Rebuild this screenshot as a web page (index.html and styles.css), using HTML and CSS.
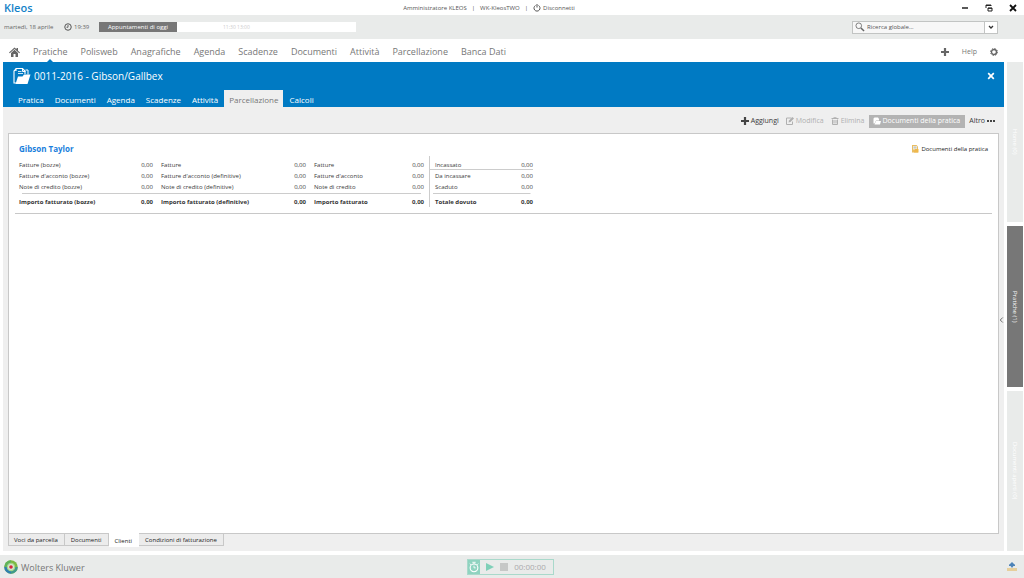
FILE: index.html
```html
<!DOCTYPE html>
<html lang="it">
<head>
<meta charset="utf-8">
<meta name="viewport" content="width=device-width, initial-scale=1">
<title>Kleos</title>
<link rel="stylesheet" href="styles.css">
</head>
<body>
<div class="app">
  <header class="titlebar">
    <div class="brand">Kleos</div>
    <div class="session">
      <span>Amministratore KLEOS</span><span>|</span><span>WK-KleosTWO</span><span>|</span>
      <button class="logout"><svg class="ico8" viewBox="0 0 16 16"><path d="M5 3a6 6 0 1 0 6 0M8 0v7" fill="none" stroke="#555" stroke-width="2"/></svg>Disconnetti</button>
    </div>
    <div class="window-controls">
      <button aria-label="Riduci"><svg viewBox="0 0 8 8"><path d="M1 4h6" stroke="#222" stroke-width="1.500"/></svg></button>
      <button aria-label="Ripristina"><svg viewBox="0 0 8 8"><path d="M1 4V1h5M1 1.500h5.500M3 4h4v3H3zM3 4.300h4" fill="none" stroke="#222"/></svg></button>
      <button aria-label="Chiudi"><svg viewBox="0 0 8 8"><path d="M1 1l6 6M7 1L1 7" stroke="#111" stroke-width="1.800"/></svg></button>
    </div>
  </header>

  <div class="infobar">
    <span class="date">martedì, 18 aprile</span>
    <span class="time"><svg class="ico8" viewBox="0 0 16 16"><circle cx="8" cy="8" r="6.500" fill="none" stroke="#555" stroke-width="2"/><path d="M8 4v4.500H5" fill="none" stroke="#555" stroke-width="1.800"/></svg>19:39</span>
    <div class="agenda-strip"><button class="today">Appuntamenti di oggi</button><span class="slot">11:30 13:00</span></div>
    <div class="search">
      <svg class="ico10" viewBox="0 0 16 16"><circle cx="6" cy="6" r="4.500" fill="none" stroke="#666" stroke-width="1.300"/><path d="M9.500 9.500l5 5" stroke="#666" stroke-width="2.400"/></svg>
      <input type="text" placeholder="Ricerca globale..." aria-label="Ricerca globale">
      <button aria-label="Opzioni di ricerca"><svg viewBox="0 0 8 8"><path d="M2 3L4 5l2-2" fill="none" stroke="#333" stroke-width="1.300"/></svg></button>
    </div>
  </div>

  <nav class="mainnav">
    <a href="#" class="home" aria-label="Home"><svg viewBox="0 0 22 20"><path d="M11 1L0 11l1.500 1.500L11 4l9.500 8.500L22 11l-4-3.600V2h-3v2.600z" fill="#666"/><path d="M11 5.500L4 12v8h5v-6h4v6h5v-8z" fill="#666"/></svg></a>
    <a href="#" class="current">Pratiche</a>
    <a href="#">Polisweb</a>
    <a href="#">Anagrafiche</a>
    <a href="#">Agenda</a>
    <a href="#">Scadenze</a>
    <a href="#">Documenti</a>
    <a href="#">Attività</a>
    <a href="#">Parcellazione</a>
    <a href="#">Banca Dati</a>
    <div class="nav-tools">
      <button aria-label="Nuovo"><svg class="ico8" viewBox="0 0 8 8"><path d="M4 0v8M0 4h8" stroke="#666" stroke-width="2.200"/></svg></button>
      <a href="#" class="help">Help</a>
      <button aria-label="Impostazioni"><svg class="ico8" viewBox="0 0 16 16"><circle cx="8" cy="8" r="7" fill="none" stroke="#666" stroke-width="2" stroke-dasharray="2.750 2.750"/><circle cx="8" cy="8" r="5" fill="none" stroke="#666" stroke-width="2.800"/></svg></button>
    </div>
  </nav>

  <div class="workspace">
    <main class="matter">
      <div class="matter-head">
        <div class="matter-title">
          <svg class="folder" viewBox="0 0 36 36"><path d="M6 32H2V8l4-4M6 8V3h13l5 5v6" fill="none" stroke="#fff" stroke-width="2.200"/><path d="M19 3v6h6" fill="none" stroke="#fff" stroke-width="2"/><path d="M10 9h7M10 13h10" stroke="#fff" stroke-width="1.600"/><path d="M25 6h5v9" fill="none" stroke="#fff" stroke-width="2"/><path d="M5 34l5-15h9l3-4h13l-6 19z" fill="#fff"/></svg>
          <h1>0011-2016 - Gibson/Gallbex</h1>
          <button class="close" aria-label="Chiudi pratica"><svg viewBox="0 0 8 8"><path d="M1.200 1.200l5.600 5.600M6.800 1.200L1.200 6.800" stroke="#fff" stroke-width="1.700"/></svg></button>
        </div>
        <nav class="tabs">
          <a href="#">Pratica</a><a href="#">Documenti</a><a href="#">Agenda</a><a href="#">Scadenze</a><a href="#">Attività</a><a href="#" class="active">Parcellazione</a><a href="#">Calcoli</a>
        </nav>
      </div>

      <div class="toolbar">
        <button><svg class="ico8" viewBox="0 0 8 8"><path d="M4 0v8M0 4h8" stroke="#444" stroke-width="2.200"/></svg>Aggiungi</button>
        <button class="off"><svg class="ico8" viewBox="0 0 16 16"><path d="M11 2H1v13h12V9" fill="none" stroke="#b0b0b0" stroke-width="2"/><path d="M5 11l1-4 7-7 3 3-7 7z" fill="#b0b0b0"/></svg>Modifica</button>
        <button class="off"><svg class="ico8" viewBox="0 0 16 16"><path d="M1 3h14M5 1.500h6" stroke="#b0b0b0" stroke-width="2"/><path d="M3 5v10h10V5M6 6v7M10 6v7" fill="none" stroke="#b0b0b0" stroke-width="2"/></svg>Elimina</button>
        <button class="pressed"><svg class="ico8" viewBox="0 0 16 16"><path d="M1 13V3l2-2h7l2 3v3H6l-3 6z" fill="#fff"/><path d="M3 15l3-7h10l-2 7z" fill="#fff"/></svg>Documenti della pratica</button>
        <button class="more">Altro<svg class="ico8" viewBox="0 0 8 8"><path d="M0 4h2M3 4h2M6 4h2" stroke="#444" stroke-width="1.800"/></svg></button>
      </div>

      <section class="sheet">
        <div class="client">
          <div class="client-head">
            <h2>Gibson Taylor</h2>
            <a href="#" class="docs"><svg class="ico8" viewBox="0 0 16 16"><path d="M2 0h9l3 3v12H2z" fill="#e9bd62"/><path d="M4 2h8v7H4z" fill="#f7f0dc"/><path d="M5 4h6M5 6h6" stroke="#8b98a8"/><path d="M8 8h7v7H6z" fill="#efb84c"/></svg>Documenti della pratica</a>
          </div>
          <div class="figures">
            <table class="billed">
              <colgroup><col class="c-a"><col class="c-n"><col class="c-b"><col class="c-n"><col class="c-c"><col class="c-n"></colgroup>
              <tbody>
                <tr><th scope="row">Fatture (bozze)</th><td>0,00</td><th>Fatture</th><td>0,00</td><th>Fatture</th><td>0,00</td></tr>
                <tr><th scope="row">Fatture d'acconto (bozze)</th><td>0,00</td><th>Fatture d'acconto (definitive)</th><td>0,00</td><th>Fatture d'acconto</th><td>0,00</td></tr>
                <tr><th scope="row">Note di credito (bozze)</th><td>0,00</td><th>Note di credito (definitive)</th><td>0,00</td><th>Note di credito</th><td>0,00</td></tr>
              </tbody>
              <tfoot>
                <tr><th scope="row">Importo fatturato (bozze)</th><td>0,00</td><th>Importo fatturato (definitive)</th><td>0,00</td><th>Importo fatturato</th><td>0,00</td></tr>
              </tfoot>
            </table>
            <div class="due-box">
              <table class="due">
                <tbody>
                  <tr class="ruled"><th scope="row">Incassato</th><td>0,00</td></tr>
                  <tr><th scope="row">Da incassare</th><td>0,00</td></tr>
                  <tr><th scope="row">Scaduto</th><td>0,00</td></tr>
                </tbody>
                <tfoot><tr><th scope="row">Totale dovuto</th><td>0,00</td></tr></tfoot>
              </table>
            </div>
          </div>
        </div>
      </section>

      <nav class="sheet-tabs">
        <a href="#">Voci da parcella</a><a href="#">Documenti</a><a href="#" class="active">Clienti</a><a href="#">Condizioni di fatturazione</a>
      </nav>
      <button class="collapse" aria-label="Espandi pannello"><svg viewBox="0 0 6 8"><path d="M4.500 1L1.500 4l3 3" fill="none" stroke="#555"/></svg></button>
    </main>

    <aside class="rail">
      <button>Home (0)</button>
      <button class="active">Pratiche (1)</button>
      <button>Documenti aperti (0)</button>
    </aside>
  </div>

  <footer class="footer">
    <div class="company">
      <svg viewBox="0 0 28 28"><circle cx="14" cy="14" r="13.500" fill="#7cba43"/><path d="M14 .5A13.500 13.500 0 0 0 .5 14h6A7.500 7.500 0 0 1 14 6.500z" fill="#5fb35a"/><path d="M.5 14A13.500 13.500 0 0 0 14 27.500v-6A7.500 7.500 0 0 1 6.500 14z" fill="#2f7fb0"/><path d="M14 27.500A13.500 13.500 0 0 0 27.500 14h-6A7.500 7.500 0 0 1 14 21.500z" fill="#3f9a8b"/><circle cx="14" cy="14" r="8.500" fill="#a5d48c"/><circle cx="14" cy="14" r="6" fill="#d6ead0"/><circle cx="14" cy="14" r="3.600" fill="#d5283e"/></svg>
      <span>Wolters Kluwer</span>
    </div>
    <div class="timer">
      <button class="watch" aria-label="Cronometro"><svg viewBox="0 0 14 14"><circle cx="7" cy="8" r="4.500" fill="none" stroke="#fff" stroke-width="1.300"/><path d="M7 5.500V8h2M5 1.500h4M7 1.500v2M2 3l1.500 1.500M12 3l-1.500 1.500" fill="none" stroke="#fff"/></svg></button>
      <button aria-label="Avvia"><svg viewBox="0 0 8 8"><path d="M0 0l8 4-8 4z" fill="#7fd0b8"/></svg></button>
      <button aria-label="Ferma"><svg viewBox="0 0 8 8"><path d="M0 0h8v8H0z" fill="#c6c8c7"/></svg></button>
      <span>00:00:00</span>
    </div>
    <button class="tray" aria-label="Scarica"><svg viewBox="0 0 10 10"><path d="M0 6h10v3H0z" fill="#e6cf9c"/><path d="M5 0l2.500 2.500L5 6 2.500 2.500z" fill="#4d83b8"/><path d="M2 2.500h6v1.500H2z" fill="#4d83b8"/></svg></button>
  </footer>
</div>
</body>
</html>
```
FILE: styles.css
```css
* { box-sizing: border-box; }
html, body { height: 100%; }
body {
  margin: 0;
  background: #fff;
  color: #3a3a3a;
  font: 6px/10px "Open Sans", "Noto Sans", sans-serif;
}
a { color: inherit; text-decoration: none; }
button {
  display: inline-flex;
  align-items: center;
  justify-content: center;
  margin: 0;
  padding: 0;
  border: 0;
  background: none;
  color: inherit;
  font: inherit;
}
svg { display: block; flex: none; }
.ico8 { width: 8px; height: 8px; }
.ico10 { width: 10px; height: 10px; }

.app { display: flex; flex-direction: column; min-height: 100vh; }

.titlebar {
  display: grid;
  grid-template-columns: 1fr auto 1fr;
  align-items: center;
  height: 15px;
  padding: 0 7px 0 4px;
}
.brand { color: #1482c8; font-size: 11px; font-weight: 600; }
.session { display: flex; gap: 5px; margin-right: 43px; color: #555; }
.logout { gap: 2px; }
.window-controls { display: flex; justify-content: flex-end; gap: 16px; }
.window-controls svg { width: 8px; height: 8px; }

.infobar {
  display: flex;
  align-items: center;
  height: 24px;
  padding: 0 26px 0 4px;
  background: #e9ebea;
  color: #666;
}
.date { width: 60px; }
.time { display: flex; align-items: center; gap: 2px; width: 35px; }
.agenda-strip { display: flex; align-items: center; width: 257px; height: 10px; background: #fff; }
.today { width: 78px; height: 10px; background: #777; color: #fff; }
.slot { margin-left: 46px; color: #ccc; font-size: 5px; }
.search {
  display: flex;
  align-items: center;
  width: 146px;
  height: 13px;
  margin-left: auto;
  padding-left: 2px;
  border: 1px solid #c2c4c3;
  background: #f7f7f7;
}
.search input {
  flex: 1;
  min-width: 0;
  padding: 0 2px;
  border: 0;
  outline: 0;
  background: none;
  font: inherit;
}
.search input::placeholder { color: #555; opacity: 1; }
.search button { width: 13px; height: 11px; border-left: 1px solid #c2c4c3; background: #fff; }
.search button svg { width: 8px; height: 8px; }

.mainnav {
  display: flex;
  align-items: center;
  gap: 13px;
  height: 23px;
  padding: 2px 26px 0 9px;
  color: #777;
  font-size: 9px;
  line-height: 21px;
}
.home svg { width: 11px; height: 10px; }
.current { position: relative; }
.current::after {
  content: "";
  position: absolute;
  bottom: 0;
  left: 50%;
  margin-left: -3px;
  border: 3px solid transparent;
  border-top: 0;
  border-bottom-color: #007ac3;
}
.nav-tools { display: flex; align-items: center; gap: 13px; margin-left: auto; }
.help { font-size: 7px; }

.workspace { display: flex; flex: 1; gap: 3px; padding: 0 1px 4px 3px; }
.matter {
  position: relative;
  display: flex;
  flex: 1;
  flex-direction: column;
  min-width: 0;
  padding-bottom: 5px;
  background: #efefef;
}
.matter-head { background: #007ac3; color: #fff; }
.matter-title { display: flex; align-items: center; gap: 3px; height: 28px; padding: 0 9px 0 10px; }
.folder { width: 18px; height: 18px; }
h1 { margin: 0; font-size: 10px; font-weight: 400; }
.close { margin-left: auto; }
.close svg { width: 8px; height: 8px; }
.tabs { display: flex; gap: 1px; height: 17px; padding-left: 10px; font-size: 8px; line-height: 19px; }
.tabs a { padding: 0 5px; }
.tabs .active { background: #efefef; color: #777; }

.toolbar {
  display: flex;
  align-items: center;
  justify-content: flex-end;
  gap: 7px;
  height: 26px;
  padding: 2px 9px 0 0;
  font-size: 7px;
}
.toolbar button { gap: 2px; }
.toolbar .off { color: #b0b0b0; }
.toolbar .pressed { height: 13px; margin: 0 -3px; padding: 0 5px 0 4px; background: #b3b3b3; color: #fff; }

.sheet {
  flex: 1;
  margin: 0 5px;
  padding: 8px 6px;
  border: 1px solid #c8c8c8;
  background: #fff;
}
.client { padding: 0 4px 6px; border-bottom: 1px solid #c8c8c8; }
.client-head { display: flex; align-items: center; justify-content: space-between; height: 14px; }
h2 { margin: 0; color: #1a80dc; font-size: 8px; font-weight: 700; }
.docs { display: flex; align-items: center; gap: 2px; color: #222; }

.figures { display: flex; gap: 5px; }
table { border-collapse: collapse; table-layout: fixed; }
th, td { height: 11px; padding: 0; line-height: 10px; white-space: nowrap; }
th { font-weight: 400; text-align: left; }
td { text-align: right; }
tfoot th, tfoot td { height: 15px; padding-top: 5px; color: #333; font-weight: 700; }
tfoot { background: linear-gradient(#ccc, #ccc) center 1px / calc(100% - 6px) 1px no-repeat; }
.billed { width: 405px; margin-top: 3px; }
.billed td + th { padding-left: 8px; }
.c-a { width: 114px; }
.c-b { width: 133px; }
.c-c { width: 98px; }
.c-n { width: 20px; }
.due-box { padding-top: 3px; border-left: 1px solid #ccc; }
.due { width: 103px; }
.due th { padding-left: 5px; }
.due .ruled { background: linear-gradient(#ccc, #ccc) bottom / 100% 1px no-repeat; }

.sheet-tabs { display: flex; height: 12px; padding-left: 5px; color: #222; line-height: 12px; }
.sheet-tabs a { height: 12px; padding: 0 6px; border: 1px solid #c8c8c8; border-width: 0 1px 1px 0; background: #ececec; }
.sheet-tabs a:first-child { padding-left: 5px; border-left-width: 1px; }
.sheet-tabs .active { height: 14px; margin-top: -1px; border-color: #fff; background: #fff; line-height: 16px; }

.collapse { position: absolute; right: 0; top: 254px; }
.collapse svg { width: 5px; height: 8px; }

.rail { display: flex; flex-direction: column; gap: 4px; width: 16px; }
.rail button {
  flex: 1;
  background: #e9ebea;
  color: #fff;
  writing-mode: vertical-rl;
}
.rail .active { background: #777; }

.footer {
  display: grid;
  grid-template-columns: 1fr auto 1fr;
  align-items: center;
  height: 23px;
  padding: 0 7px 0 4px;
  background: #e9ebea;
}
.company { display: flex; align-items: center; gap: 3px; color: #777; font-size: 9px; }
.company span { padding-top: 2px; }
.company svg { width: 14px; height: 14px; }
.timer { display: flex; align-items: center; gap: 6px; height: 16px; padding-right: 7px; border: 1px solid #a9d9cb; color: #aaa; font-size: 8px; }
.timer svg { width: 8px; height: 8px; }
.timer .watch { width: 12px; height: 14px; background: #8fd3c0; }
.timer .watch svg { width: 12px; height: 12px; }
.tray { justify-self: end; }
.tray svg { width: 10px; height: 10px; }
```
